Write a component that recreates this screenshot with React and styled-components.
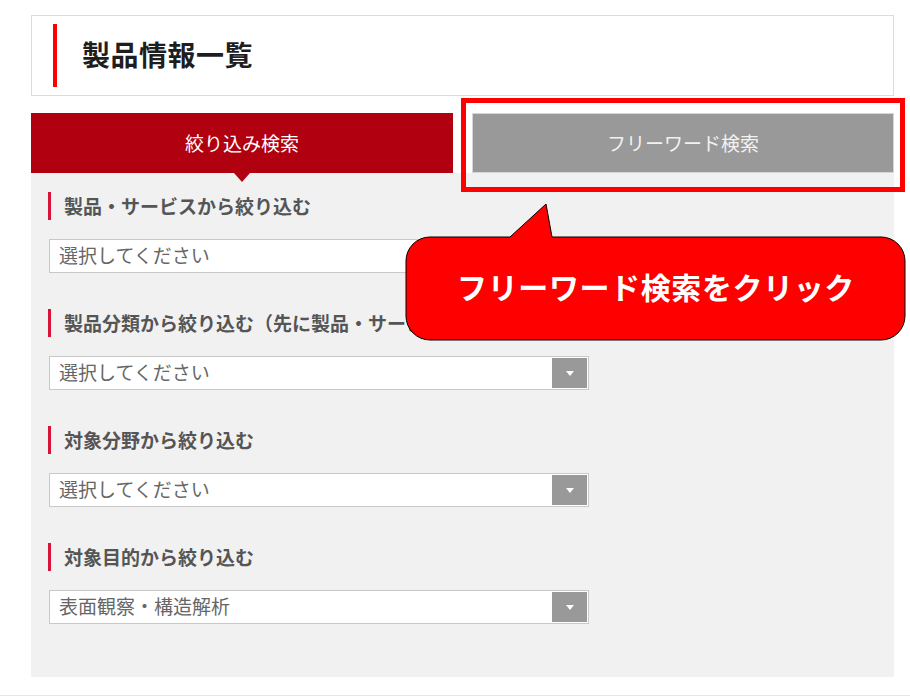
import React from "react";
import styled, { createGlobalStyle } from "styled-components";

const GlobalStyle = createGlobalStyle`
  html, body { margin: 0; padding: 0; background: #fff; }
  body { font-family: "Noto Sans CJK JP", "Noto Sans", sans-serif; }
  * { box-sizing: border-box; }
`;

const Page = styled.div`
  position: relative;
  width: 910px;
  padding-top: 15px;
`;

const Content = styled.div`
  width: 863px;
  margin-left: 31px;
`;

const Header = styled.div`
  height: 81px;
  border: 1px solid #dcdcdc;
  display: flex;
  align-items: center;
  padding: 0 21px;
  gap: 25px;
`;

const HeaderBar = styled.span`
  width: 4px;
  height: 63px;
  background: #ff0000;
`;

const Title = styled.h1`
  margin: 0;
  padding-bottom: 3px;
  font-size: 28px;
  line-height: 1;
  letter-spacing: 0.5px;
  font-weight: 700;
  color: #1e1e1e;
`;

const Tabs = styled.div`
  margin-top: 17px;
  display: grid;
  grid-template-columns: 422px 422px;
  column-gap: 19px;
`;

const Tab = styled.div`
  position: relative;
  height: 60px;
  display: flex;
  align-items: center;
  justify-content: center;
  padding-bottom: 2px;
  font-size: 19px;
  line-height: 1;
  background: ${(p) => (p.$active ? "#b1000f" : "#999999")};
  color: ${(p) => (p.$active ? "#ffffff" : "#f2f2f2")};
  border: ${(p) => (p.$active ? "none" : "1px solid #d6d6d6")};
  &::after {
    content: "";
    display: ${(p) => (p.$active ? "block" : "none")};
    position: absolute;
    left: 50%;
    bottom: -9px;
    transform: translateX(-50%);
    border-left: 8px solid transparent;
    border-right: 8px solid transparent;
    border-top: 9px solid #b1000f;
  }
`;

const Highlight = styled.div`
  position: absolute;
  top: -16px;
  left: -12px;
  right: -12px;
  bottom: -20px;
  border: 5px solid #ff0000;
  pointer-events: none;
`;

const Panel = styled.div`
  background: #f1f1f1;
  padding: 19px 17px 53px;
  display: flex;
  flex-direction: column;
  gap: 36px;
`;

const Group = styled.div`
  display: flex;
  flex-direction: column;
  gap: 19px;
`;

const Label = styled.div`
  height: 28px;
  display: flex;
  align-items: center;
  gap: 13px;
  font-size: 19px;
  font-weight: 700;
  color: #555555;
  white-space: nowrap;
  &::before {
    content: "";
    width: 3px;
    height: 28px;
    background: #d7133a;
  }
`;

const LabelText = styled.span`
  line-height: 1;
  padding-bottom: 2px;
`;

const Select = styled.div`
  width: 540px;
  height: 34px;
  margin-left: 1px;
  background: #fff;
  border: 1px solid #c9c9c9;
  display: flex;
  align-items: stretch;
`;

const SelectText = styled.span`
  flex: 1;
  display: flex;
  align-items: center;
  padding: 0 0 4px 9px;
  font-size: 19px;
  line-height: 1;
  color: #666666;
`;

const Arrow = styled.span`
  width: 35px;
  margin: 1px;
  background: #999999;
  display: flex;
  align-items: center;
  justify-content: center;
  &::after {
    content: "";
    border-left: 4px solid transparent;
    border-right: 4px solid transparent;
    border-top: 5px solid #ffffff;
  }
`;

const Footer = styled.div`
  margin-top: 18px;
  border-top: 1px solid #e6e6e6;
  height: 1px;
`;

const Callout = styled.div`
  position: absolute;
  left: 405px;
  top: 203px;
  width: 502px;
  height: 138px;
`;

const CalloutShape = styled.svg`
  position: absolute;
  inset: 0;
`;

const CalloutText = styled.div`
  position: absolute;
  left: 0;
  right: 0;
  top: 34px;
  height: 103px;
  display: flex;
  align-items: center;
  justify-content: center;
  padding-bottom: 6px;
  color: #ffffff;
  font-size: 30px;
  line-height: 1;
  font-weight: 700;
  letter-spacing: 0.6px;
  white-space: nowrap;
`;

const groups = [
  { label: "製品・サービスから絞り込む", value: "選択してください" },
  { label: "製品分類から絞り込む（先に製品・サービスを選択してください）", value: "選択してください" },
  { label: "対象分野から絞り込む", value: "選択してください" },
  { label: "対象目的から絞り込む", value: "表面観察・構造解析" },
];

export default function App() {
  return (
    <>
      <GlobalStyle />
      <Page>
        <Content>
          <Header>
            <HeaderBar />
            <Title>製品情報一覧</Title>
          </Header>
          <Tabs>
            <Tab $active>絞り込み検索</Tab>
            <Tab>
              フリーワード検索
              <Highlight />
            </Tab>
          </Tabs>
          <Panel>
            {groups.map((g, i) => (
              <Group key={i}>
                <Label>
                  <LabelText>{g.label}</LabelText>
                </Label>
                <Select>
                  <SelectText>{g.value}</SelectText>
                  <Arrow />
                </Select>
              </Group>
            ))}
          </Panel>
        </Content>
        <Footer />
        <Callout>
          <CalloutShape width="502" height="138" viewBox="0 0 502 138">
            <path
              d="M 25 34 L 105 34 L 141 1 L 147 34 L 476 34 A 24 24 0 0 1 500 58 L 500 113 A 24 24 0 0 1 476 137 L 25 137 A 24 24 0 0 1 1 113 L 1 58 A 24 24 0 0 1 25 34 Z"
              fill="#ff0000"
              stroke="#000000"
              strokeWidth="1"
            />
          </CalloutShape>
          <CalloutText>フリーワード検索をクリック</CalloutText>
        </Callout>
      </Page>
    </>
  );
}
